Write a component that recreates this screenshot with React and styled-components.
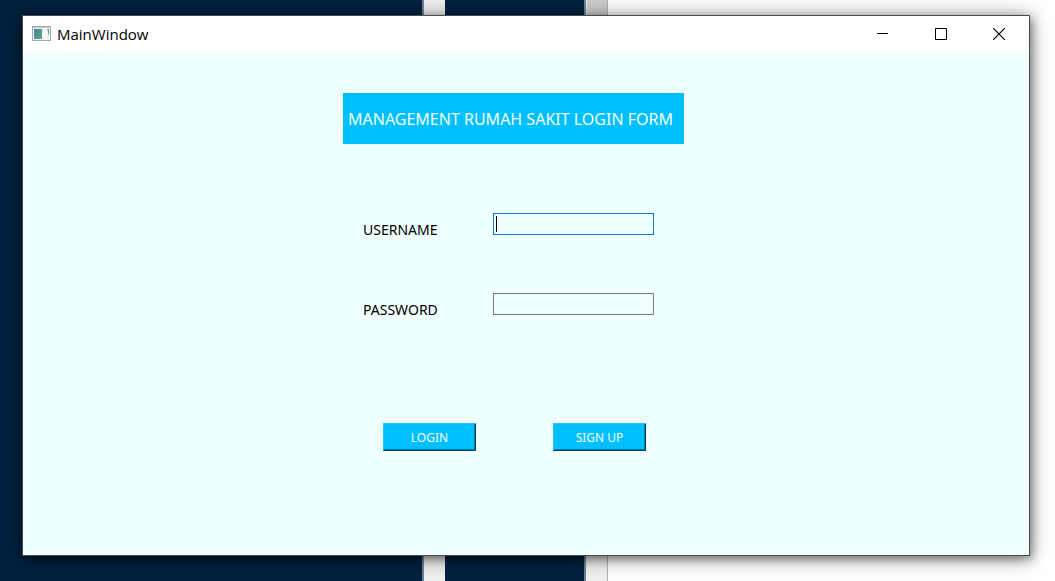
import React from "react";
import styled, { createGlobalStyle } from "styled-components";

const GlobalStyle = createGlobalStyle`
  * { box-sizing: border-box; }
  body { margin: 0; }
`;

const uiFont = `"Open Sans", "Noto Sans", sans-serif`;
const formFont = `"Noto Sans", "DejaVu Sans Condensed", sans-serif`;

const Desktop = styled.div`
  display: flex;
  min-height: 100vh;
  padding: 15px 25px 25px 22px;
  background:
    linear-gradient(#cdcdcd, #cdcdcd) 587px 0 / 20px 40px no-repeat,
    linear-gradient(
      90deg,
      #00213f 0 422px,
      #6e8294 422px 424px,
      #f0f0f0 424px 445px,
      #00213f 445px 584px,
      #6e8294 584px 586px,
      #f0f0f0 586px 607px,
      #b4b4b4 607px 608px,
      #ffffff 608px
    );
`;

const Window = styled.div`
  flex: 1;
  display: flex;
  flex-direction: column;
  border: 1px solid #474a4d;
  background: #f0ffff;
  box-shadow: 0 2px 18px rgba(0, 0, 0, 0.5), 2px 3px 8px rgba(0, 0, 0, 0.3);
`;

const TitleBar = styled.header`
  display: flex;
  align-items: center;
  height: 37px;
  padding: 0 1px 1px 9px;
  background: #ffffff;
`;

const Title = styled.h1`
  flex: 1;
  margin: 0 0 0 6px;
  font: 400 15px/20px ${uiFont};
  color: #000;
`;

const Controls = styled.div`
  display: flex;
`;

const ControlButton = styled.button`
  display: grid;
  place-items: center;
  width: 58px;
  height: 36px;
  padding: 0;
  border: 0;
  background: transparent;
  color: #000;
`;

const Body = styled.main`
  flex: 1;
  display: flex;
  flex-direction: column;
  align-items: center;
  padding: 40px 25px 40px 0;
  font-family: ${formFont};
`;

const Form = styled.form`
  width: 341px;
`;

const Heading = styled.h2`
  height: 51px;
  margin: 0 0 69px;
  padding-left: 5px;
  background: #00bfff;
  color: #f0ffff;
  font-size: 16px;
  font-weight: 400;
  line-height: 53px;
  white-space: nowrap;
`;

const Fields = styled.div`
  display: flex;
  flex-direction: column;
  gap: 53px;
  padding-left: 20px;
`;

const Field = styled.div`
  display: grid;
  grid-template-columns: 130px 161px;
  height: 27px;
`;

const Label = styled.label`
  align-self: end;
  font-size: 14px;
  line-height: 20px;
  color: #000;
`;

const InputWrap = styled.div`
  position: relative;
  height: 22px;
`;

const Input = styled.input`
  display: block;
  width: 100%;
  height: 22px;
  padding: 0 3px;
  border: 1px solid ${(p) => (p.$active ? "#0078d7" : "#7a7a7a")};
  border-radius: 0;
  outline: none;
  background: transparent;
  caret-color: transparent;
  font: 14px ${formFont};
`;

const Caret = styled.span`
  position: absolute;
  top: 3px;
  left: 3px;
  width: 1px;
  height: 16px;
  background: #000;
`;

const Actions = styled.div`
  display: flex;
  gap: 77px;
  margin-top: 103px;
  padding-left: 40px;
`;

const ActionButton = styled.button`
  width: 93px;
  height: 28px;
  padding: 2px 0 0;
  border: 1px solid;
  border-color: #1fc6ff #00405a #00405a #1fc6ff;
  border-radius: 0;
  box-shadow: inset -1px -1px 0 #0080ab;
  background: #00bfff;
  color: #f0ffff;
  font: 12px/24px ${formFont};
`;

function AppIcon() {
  return (
    <svg width="19" height="16" viewBox="0 0 19 16" aria-hidden="true">
      <defs>
        <linearGradient id="screen" x1="0" y1="0" x2="1" y2="1">
          <stop offset="0" stopColor="#4a7fa0" />
          <stop offset="1" stopColor="#5aa880" />
        </linearGradient>
      </defs>
      <rect x="0.5" y="0.5" width="18" height="14" fill="#eff1f2" stroke="#a3a8af" />
      <rect x="1" y="1" width="17" height="1" fill="#c5cad0" />
      <rect x="2" y="3" width="8" height="10" fill="url(#screen)" />
      <rect x="11" y="3" width="4" height="10" fill="#f8f8f8" />
      <rect x="16" y="3" width="1" height="4" fill="#5c9f94" />
      <rect x="15" y="3" width="1" height="2" fill="#a9cbc8" />
      <rect x="16" y="7" width="1" height="2" fill="#8fc08c" />
    </svg>
  );
}

function Glyph({ d, width = 1 }) {
  return (
    <svg width="12" height="12" viewBox="0 0 12 12" fill="none" stroke="currentColor" strokeWidth={width} aria-hidden="true">
      <path d={d} />
    </svg>
  );
}

export default function App() {
  return (
    <>
      <GlobalStyle />
      <Desktop>
        <Window>
          <TitleBar>
            <AppIcon />
            <Title>MainWindow</Title>
            <Controls>
              <ControlButton type="button" aria-label="Minimize">
                <Glyph d="M0 5.5H11" />
              </ControlButton>
              <ControlButton type="button" aria-label="Maximize">
                <Glyph d="M0.5 0.5H11.5V11.5H0.5Z" />
              </ControlButton>
              <ControlButton type="button" aria-label="Close">
                <Glyph d="M0 0L12 12M12 0L0 12" width={1.2} />
              </ControlButton>
            </Controls>
          </TitleBar>
          <Body>
            <Form onSubmit={(e) => e.preventDefault()}>
              <Heading>MANAGEMENT RUMAH SAKIT LOGIN FORM</Heading>
              <Fields>
                <Field>
                  <Label htmlFor="username">USERNAME</Label>
                  <InputWrap>
                    <Input id="username" type="text" $active />
                    <Caret />
                  </InputWrap>
                </Field>
                <Field>
                  <Label htmlFor="password">PASSWORD</Label>
                  <InputWrap>
                    <Input id="password" type="password" />
                  </InputWrap>
                </Field>
              </Fields>
              <Actions>
                <ActionButton type="submit">LOGIN</ActionButton>
                <ActionButton type="button">SIGN UP</ActionButton>
              </Actions>
            </Form>
          </Body>
        </Window>
      </Desktop>
    </>
  );
}
